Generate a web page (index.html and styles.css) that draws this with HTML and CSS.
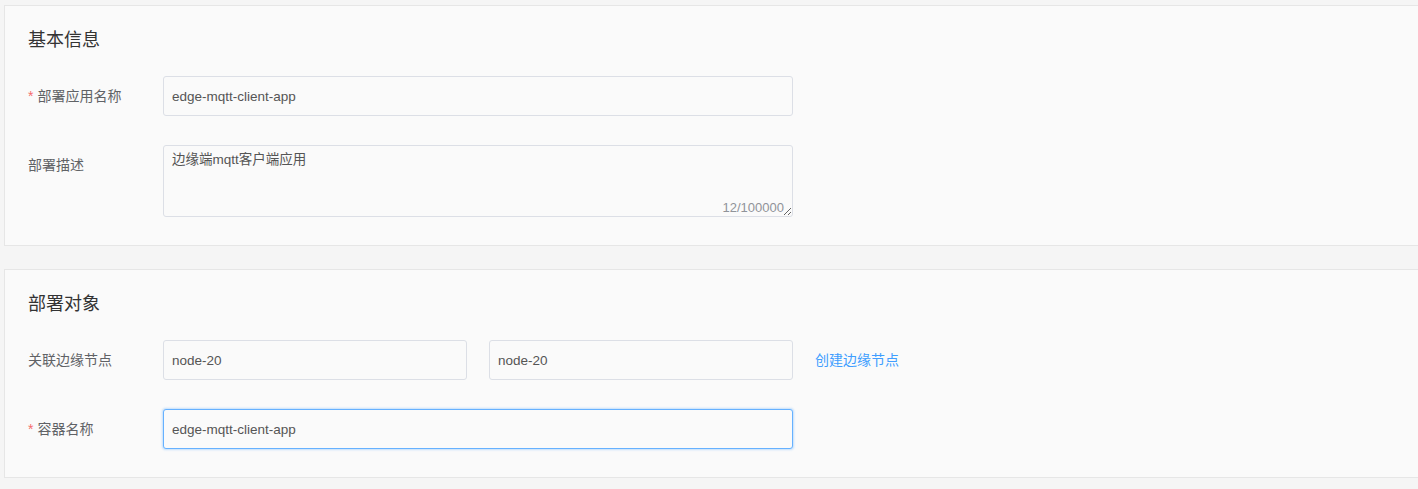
FILE: index.html
```html
<!DOCTYPE html>
<html lang="zh-CN">
<head>
  <meta charset="UTF-8" />
  <meta name="viewport" content="width=device-width, initial-scale=1.0"/>
  <title>部署应用</title>
  <link rel="stylesheet" href="styles.css">
</head>
<body>
  <div class="page">
    <section class="card">
      <h2 class="card-title">基本信息</h2>

      <div class="form-item">
        <label class="form-label required">部署应用名称</label>
        <div class="form-field">
          <input class="input" type="text" value="edge-mqtt-client-app" />
        </div>
      </div>

      <div class="form-item">
        <label class="form-label">部署描述</label>
        <div class="form-field textarea-wrap">
          <textarea class="textarea">边缘端mqtt客户端应用</textarea>
          <span class="counter">12/100000</span>
        </div>
      </div>
    </section>

    <section class="card">
      <h2 class="card-title">部署对象</h2>

      <div class="form-item">
        <label class="form-label">关联边缘节点</label>
        <div class="form-field split">
          <input class="input" type="text" value="node-20" />
          <input class="input" type="text" value="node-20" />
        </div>
        <a class="link" href="#">创建边缘节点</a>
      </div>

      <div class="form-item">
        <label class="form-label required">容器名称</label>
        <div class="form-field">
          <input class="input is-focus" type="text" value="edge-mqtt-client-app" />
        </div>
      </div>
    </section>
  </div>
</body>
</html>
```

FILE: styles.css
```css
:root {
  --bg: #f5f5f5;
  --card: #fafafa;
  --card-border: #e6e6e6;
  --title: #333333;
  --label: #606266;
  --text: #555555;
  --input-border: #dcdfe6;
  --primary: #409eff;
  --danger: #f56c6c;
  --font: "Liberation Sans", "Noto Sans CJK SC", sans-serif;
}

body {
  margin: 0;
  background-color: var(--bg);
  font-family: var(--font);
  overflow: hidden;
}

.page {
  padding: 5px 0 0 4px;
  display: flex;
  flex-direction: column;
  gap: 23px;
}

.card {
  background-color: var(--card);
  border: 1px solid var(--card-border);
  margin-right: -6px;
  padding: 22px 23px 28px;
}

.card-title {
  margin: 0 0 24px;
  font-size: 18px;
  font-weight: normal;
  line-height: 24px;
  color: var(--title);
}

.form-item {
  display: flex;
  align-items: flex-start;
  margin-bottom: 29px;
}

.form-item:last-child {
  margin-bottom: 0;
}

.form-label {
  width: 135px;
  flex-shrink: 0;
  font-size: 14px;
  line-height: 40px;
  color: var(--label);
}

.form-label.required::before {
  content: "*";
  color: var(--danger);
  margin-right: 4px;
}

.form-field {
  width: 630px;
}

.split {
  display: grid;
  grid-template-columns: 1fr 1fr;
  gap: 22px;
}

.input {
  display: block;
  box-sizing: border-box;
  width: 100%;
  height: 40px;
  padding: 0 8px;
  border: 1px solid var(--input-border);
  border-radius: 3px;
  background-color: var(--card);
  font-family: var(--font);
  font-size: 13.5px;
  color: var(--text);
  outline: none;
}

.input.is-focus {
  border-color: #66b1ff;
  box-shadow: 0 0 2px 1px rgba(64, 158, 255, 0.3);
}

.textarea-wrap {
  position: relative;
}

.textarea {
  display: block;
  box-sizing: border-box;
  width: 100%;
  height: 72px;
  padding: 4px 8px;
  border: 1px solid var(--input-border);
  border-radius: 3px;
  background-color: var(--card);
  font-family: var(--font);
  font-size: 13.5px;
  line-height: 1.5;
  color: var(--text);
  outline: none;
}

.counter {
  position: absolute;
  right: 9px;
  bottom: 1px;
  font-size: 13px;
  line-height: 16px;
  color: #909399;
}

.link {
  margin-left: 22px;
  font-size: 14px;
  line-height: 40px;
  color: var(--primary);
  text-decoration: none;
}
```
